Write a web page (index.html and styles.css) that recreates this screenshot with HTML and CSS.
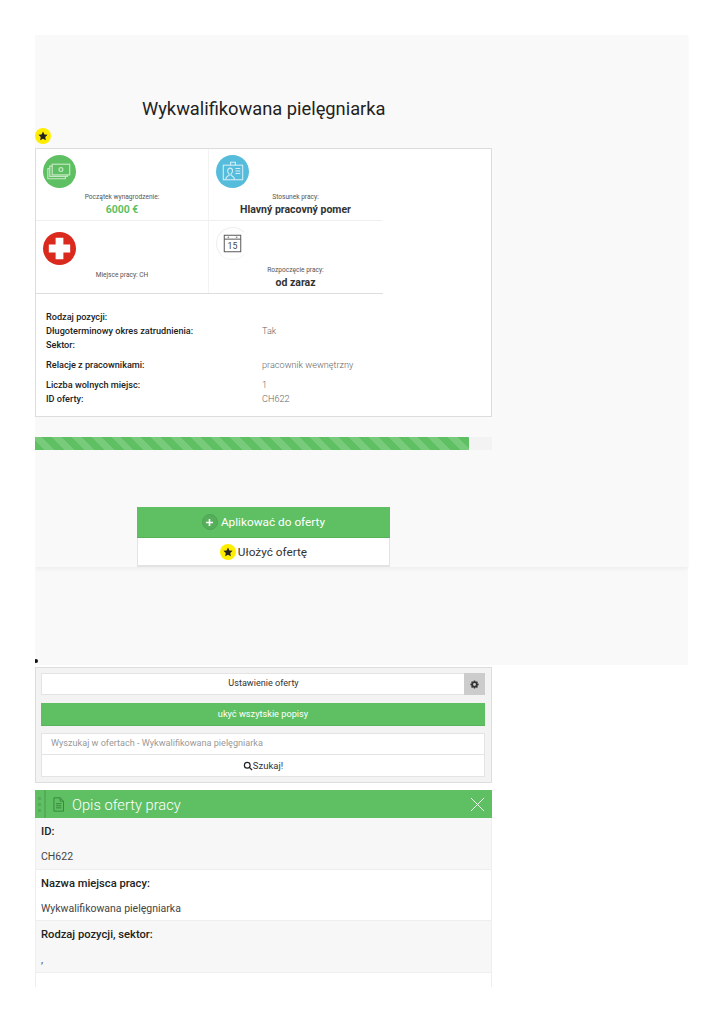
FILE: index.html
```html
<!DOCTYPE html>
<html lang="pl">
<head>
<meta charset="utf-8">
<title>Wykwalifikowana pielęgniarka</title>
<link rel="stylesheet" href="styles.css">
</head>
<body>
<div class="page">
  <section class="hero">
    <h1 class="title">Wykwalifikowana pielęgniarka</h1>
    <span class="star star-top"><svg viewBox="0 0 24 24"><path d="M12 3l2.8 5.9 6.4.8-4.7 4.4 1.2 6.4L12 17.400l-5.700 3.100 1.200-6.400-4.700-4.400 6.400-.8z"/></svg></span>
    <div class="card">
      <div class="facts">
        <div class="fact fact-a">
          <span class="ico ico-green"><svg viewBox="0 0 34 34" fill="none" stroke="#c6e8c4" stroke-width="1.2"><rect x="9.500" y="9.500" width="18" height="11"/><circle cx="18.500" cy="15" r="2"/><path d="M9.500 11.500H7v10.500h18v-1.500M7 14H5v10.500h18V22"/></svg></span>
          <p class="cap">Początek wynagrodzenie:</p>
          <p class="val val-green">6000 €</p>
        </div>
        <div class="fact fact-b">
          <span class="ico ico-blue"><svg viewBox="0 0 34 34" fill="none" stroke="#d3eef7" stroke-width="1.100"><rect x="7.500" y="10.500" width="20" height="15"/><path d="M15 10.500V7.500h5v3M10 25.500c0-3 1.500-3.500 3.500-4.500v-1.500c-1-.8-1.500-1.800-1.500-3.200 0-1.800 1-2.800 2.500-2.800s2.500 1 2.500 2.800c0 1.400-.5 2.400-1.500 3.200V21c2 1 3.500 1.500 3.500 4.500M20 14h5M20 16.500h5M20 19h5"/></svg></span>
          <p class="cap">Stosunek pracy:</p>
          <p class="val">Hlavný pracovný pomer</p>
        </div>
        <div class="fact fact-c">
          <span class="ico ico-red"><svg viewBox="0 0 34 34"><path fill="#fff" d="M13 6h8v7h7v8h-7v7h-8v-7H6v-8h7z"/></svg></span>
          <p class="cap cap-mid">Miejsce pracy: CH</p>
        </div>
        <div class="fact fact-d">
          <span class="ico ico-cal"><svg viewBox="0 0 34 34" fill="none" stroke="#555" stroke-width="1"><rect x="8.500" y="8.500" width="17" height="17"/><path d="M8.500 12.500h17"/><path d="M12 10.500h1.500M20.500 10.500H22"/><text x="17" y="22.500" text-anchor="middle" class="cal-num">15</text></svg></span>
          <p class="cap cap-low">Rozpoczęcie pracy:</p>
          <p class="val">od zaraz</p>
        </div>
      </div>
      <dl class="spec">
        <div class="row"><dt>Rodzaj pozycji:</dt><dd></dd></div>
        <div class="row"><dt>Długoterminowy okres zatrudnienia:</dt><dd>Tak</dd></div>
        <div class="row gap-after"><dt>Sektor:</dt><dd></dd></div>
        <div class="row gap-after"><dt>Relacje z pracownikami:</dt><dd>pracownik wewnętrzny</dd></div>
        <div class="row"><dt>Liczba wolnych miejsc:</dt><dd>1</dd></div>
        <div class="row"><dt>ID oferty:</dt><dd>CH622</dd></div>
      </dl>
    </div>
    <div class="progress"><div class="bar"></div></div>
    <div class="actions">
      <a class="apply"><span class="plus"><svg viewBox="0 0 16 16"><path fill="#fff" d="M6.800 3h2.400v3.800H13v2.400H9.200V13H6.800V9.200H3V6.800h3.800z"/></svg></span>Aplikować do oferty</a>
      <a class="save"><span class="star star-btn"><svg viewBox="0 0 24 24"><path d="M12 3l2.800 5.900 6.400.8-4.700 4.400 1.200 6.400L12 17.400l-5.700 3.100 1.200-6.400-4.700-4.400 6.400-.8z"/></svg></span>Ułożyć ofertę</a>
    </div>
  </section>
  <div class="band"></div>
  <ul class="dot-list"><li></li></ul>
  <section class="tools">
    <div class="setting"><span class="setting-label">Ustawienie oferty</span><span class="gear"><svg viewBox="0 0 16 16"><path fill="#333" fill-rule="evenodd" d="M6.800 1.500h2.400l.4 1.800 1.100.5 1.600-1 1.700 1.700-1 1.600.5 1.100 1.800.4v2.400l-1.800.4-.5 1.100 1 1.600-1.700 1.700-1.600-1-1.100.5-.4 1.800H6.800l-.4-1.800-1.100-.5-1.600 1-1.700-1.700 1-1.600-.5-1.100-1.800-.4V7.600l1.800-.4.500-1.100-1-1.600 1.700-1.700 1.600 1 1.100-.5zM8 6.200a2.600 2.600 0 100 5.200 2.600 2.600 0 000-5.200z" transform="translate(0 -.8)"/></svg></span></div>
    <button class="toggle">ukyć wszytskie popisy</button>
    <div class="search">
      <div class="search-input">Wyszukaj w ofertach - Wykwalifikowana pielęgniarka</div>
      <div class="search-btn"><svg viewBox="0 0 16 16" fill="none" stroke="#222" stroke-width="2"><circle cx="6.800" cy="6.800" r="4.600"/><path d="M10.200 10.200l4.300 4.300"/></svg>Szukaj!</div>
    </div>
  </section>
  <section class="desc">
    <header class="desc-head">
      <span class="grip"><i></i><i></i><i></i></span>
      <svg class="doc" viewBox="0 0 14 18" fill="none" stroke="#38893c" stroke-width="1.200"><path d="M1.500 1h7.500l4 4v12h-11.500zM9 1v4h4M4 8h6.500M4 10.500h6.500M4 13h6.500"/></svg>
      <h2>Opis oferty pracy</h2>
      <svg class="close" viewBox="0 0 16 16" fill="none" stroke="#fff" stroke-width="1"><path d="M1 1l14 14M15 1L1 15"/></svg>
    </header>
    <div class="item shade"><h3>ID:</h3><p>CH622</p></div>
    <div class="item"><h3>Nazwa miejsca pracy:</h3><p>Wykwalifikowana pielęgniarka</p></div>
    <div class="item shade"><h3>Rodzaj pozycji, sektor:</h3><p>,</p></div>
    <div class="item"></div>
  </section>
</div>
</body>
</html>
```
FILE: styles.css
```css
* { box-sizing: border-box; }
html, body { margin: 0; padding: 0; background: #fff; }
body { font-family: Roboto, "Noto Sans", sans-serif; color: #333; overflow: hidden; height: 1024px; }
p, h1, h2, h3, dl, dd, ul { margin: 0; padding: 0; }

.page { margin: 35px 35px 0; height: 952px; overflow: hidden; }

.hero { background: #f9f9f9; width: 653px; height: 532px; padding-top: 60px; box-shadow: 0 2px 4px rgba(0,0,0,.05); position: relative; }
.title { font-size: 18.300px; font-weight: 400; line-height: 28px; margin-left: 107px; color: #222; }

.star { display: flex; align-items: center; justify-content: center; background: #ffed00; border-radius: 50%; }
.star svg { width: 12px; height: 12px; fill: #222; }
.star-top { width: 16px; height: 16px; margin-top: 5px; }

.card { margin-top: 4px; width: 457px; height: 269px; background: #fff; border: 1px solid #ddd; }
.facts { display: grid; grid-template-columns: 173px 173px; grid-template-rows: 72px 72px; width: 347px; border-bottom: 1px solid #ddd; }
.fact { padding-top: 6px; text-align: center; }
.fact-a { border-bottom: 1px solid #eee; border-right: 1px solid #f3f3f3; }
.fact-b { border-bottom: 1px solid #eee; }
.fact-c { border-right: 1px solid #f3f3f3; padding-top: 11px; }
.fact-d { padding-top: 6px; }
.ico { display: block; width: 33px; height: 33px; border-radius: 50%; margin-left: 7px; }
.ico svg { display: block; width: 33px; height: 33px; }
.ico-green { background: #5fbf63; }
.ico-blue { background: #55bcdc; }
.ico-red { background: #da2a1e; }
.ico-cal { background: #fff; border: 1px solid #eee; border-right-color: #fff; border-bottom-color: #f6f6f6; }
.ico-cal svg { margin: -1px; }
.cal-num { font: 9px Roboto, sans-serif; fill: #444; stroke: none; }
.cap { font-size: 6.600px; line-height: 10px; color: #555; margin-top: 4px; }
.cap-mid { margin-top: 5px; }
.cap-low { margin-top: 5px; }
.val { font-size: 10.500px; font-weight: 700; line-height: 14px; color: #333; margin-top: 1px; }
.val-green { color: #5fbf63; }

.spec { padding: 15.500px 10px 0; font-size: 9.150px; line-height: 14px; }
.row { display: flex; }
.row.gap-after { margin-bottom: 6px; }
dt { width: 216px; font-weight: 500; color: #222; }
dd { color: #666; font-weight: 300; }

.progress { margin-top: 20px; width: 457px; height: 13px; background: #f3f3f3; }
.bar { width: 434px; height: 13px; background-color: #5fbf63;
  background-image: repeating-linear-gradient(45deg, #5fbf63 0 7px, #78cb7b 7px 14px); }

.actions { width: 253px; margin: 57px 0 0 102px; }
.apply, .save { display: flex; align-items: center; justify-content: center; font-size: 11.800px; }
.apply { height: 31px; background: #5fbf63; color: #fff; font-weight: 400; border-bottom: 1px solid #57b25b; }
.save { height: 29px; background: #fff; color: #333; border: 1px solid #e3e3e3; border-top: 0; border-bottom-width: 2px; }
.plus { width: 16px; height: 16px; border-radius: 50%; background: #55ae59; border: 1px solid #50a554; margin-right: 3px; display: flex; align-items: center; justify-content: center; }
.plus svg { width: 11px; height: 11px; }
.star-btn { width: 16px; height: 16px; margin-right: 2px; }

.band { width: 653px; height: 98px; background: #f9f9f9; }

.dot-list { list-style: none; height: 2px; position: relative; }
.dot-list li { position: absolute; left: -1px; top: -6px; width: 4px; height: 4px; border-radius: 50%; background: #111; }

.tools { width: 457px; height: 116px; background: #f3f3f3; border: 1px solid #ddd; padding: 5px 6px 5px 5px; }
.setting { display: flex; height: 22px; background: #fff; border: 1px solid #e4e4e4; }
.setting-label { flex: 1; padding-left: 21px; text-align: center; font-size: 9.100px; line-height: 19px; color: #333; }
.gear { width: 21px; margin: -1px -1px -1px 0; background: #ccc; display: flex; align-items: center; justify-content: center; }
.gear svg { width: 9px; height: 9px; }
.toggle { display: block; width: 100%; height: 23px; margin-top: 8px; background: #5fbf63; color: #fff; border: 0; border-bottom: 1px solid #57b25b; font: 9.200px/22px Roboto, sans-serif; padding: 0; }
.search { margin-top: 7px; background: #fff; border: 1px solid #e4e4e4; }
.search-input { height: 21px; padding-left: 9px; font-size: 9.100px; line-height: 18px; color: #999; border-bottom: 1px solid #e4e4e4; }
.search-btn { height: 21px; display: flex; align-items: center; justify-content: center; font-size: 9.500px; color: #333; }
.search-btn svg { width: 10px; height: 10px; }

.desc { margin-top: 7px; width: 457px; }
.desc-head { display: flex; align-items: center; height: 28px; background: #5fbf63; }
.grip { width: 11px; height: 28px; border-right: 2px solid #54ad58; display: flex; flex-direction: column; justify-content: center; gap: 3px; align-items: center; padding-right: 1px; }
.grip i { display: block; width: 3px; height: 3px; background: #54ad58; }
.doc { width: 13px; height: 15px; margin-left: 6px; }
.desc-head h2 { font-size: 14.700px; font-weight: 300; color: #fff; margin-left: 7px; padding-top: 1px; flex: 1; }
.close { width: 15px; height: 15px; margin-right: 7px; }
.item { height: 51.500px; padding: 7px 5px 0; border: 1px solid #eee; border-top: 0; background: #fff; }
.item.shade { background: #f7f7f7; }
.item h3 { font-size: 11.200px; font-weight: 500; line-height: 14px; color: #222; }
.item p { font-size: 10.500px; line-height: 14px; margin-top: 11px; color: #444; }
```
